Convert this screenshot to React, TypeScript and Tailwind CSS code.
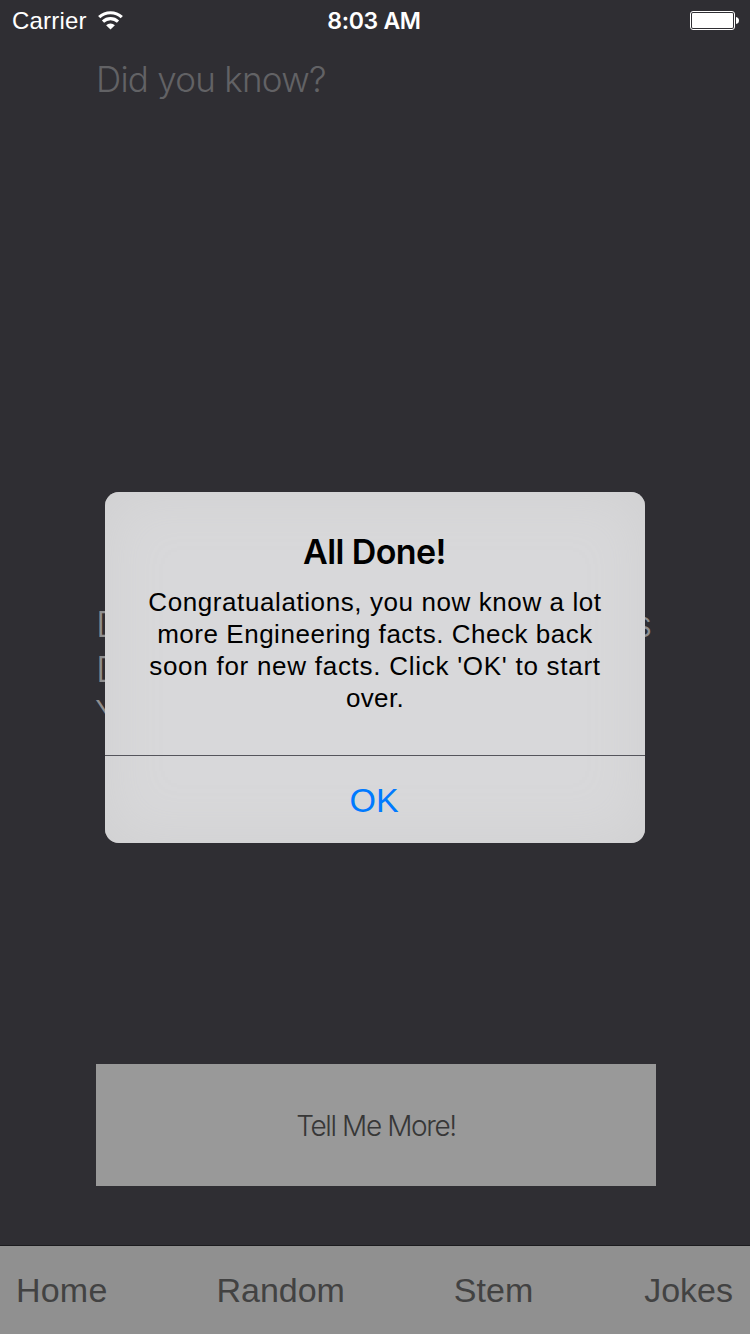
const sans = "font-['Liberation_Sans',sans-serif]";
const inter = "font-['Inter',sans-serif]";

function Wifi() {
  return (
    <svg width="26" height="20" viewBox="0 0 26 20" fill="none" stroke="white" className="ml-[11px]">
      <path d="M1.2 6.2 A16.6 16.6 0 0 1 23.8 6.2" strokeWidth="3.2" />
      <path d="M5 10.6 A11 11 0 0 1 20 10.6" strokeWidth="3.2" />
      <path d="M12.5 18.6 L8.1 14.2 A6.4 6.4 0 0 1 16.9 14.2 Z" fill="white" stroke="none" />
    </svg>
  );
}

function Battery() {
  return (
    <svg width="50" height="20" viewBox="0 0 50 20" className="mt-[1px]">
      <rect x="0.5" y="0.5" width="44" height="18" rx="2.5" fill="none" stroke="white" />
      <rect x="2" y="2" width="41" height="15" rx="1" fill="white" />
      <path d="M46 6 Q49 6.5 49 9.5 Q49 12.5 46 13 Z" fill="white" />
    </svg>
  );
}

function StatusBar() {
  return (
    <header className="flex h-10 items-start text-[24px] leading-10 text-white">
      <div className="flex h-[41px] w-[250px] shrink-0 items-center pl-[12px]">
        <span className="pt-[1px] tracking-[0.2px]">Carrier</span>
        <Wifi />
      </div>
      <span className={`${inter} w-[250px] pt-[1px] pr-[2px] text-center text-[23px] font-semibold tracking-[-0.3px]`}>
        8:03 AM
      </span>
      <div className="flex w-[250px] justify-end pt-[10px] pr-[10px]">
        <Battery />
      </div>
    </header>
  );
}

function Alert() {
  return (
    <div className="absolute top-[492px] left-[105px] flex h-[351px] w-[540px] flex-col rounded-[14px] bg-[#d8d8da] text-center text-black shadow-[inset_0_0_60px_#d0d0d1]">
      <div className="h-[263px] pt-[39px]">
        <h2 className={`${inter} pr-[1px] text-[34px] leading-[42px] font-semibold tracking-[-0.6px]`}>All Done!</h2>
        <p className="flex flex-col pt-[13px] text-[26px] leading-8">
          <span className="tracking-[0.59px]">Congratualations, you now know a lot</span>
          <span className="tracking-[0.53px]">more Engineering facts. Check back</span>
          <span className="tracking-[0.73px]">soon for new facts. Click 'OK' to start</span>
          <span className="tracking-[0.35px]">over.</span>
        </p>
      </div>
      <button className="flex-1 border-t border-[#55555c] pt-[2px] pr-[2px] text-[34px] text-[#007aff]">OK</button>
    </div>
  );
}

export default function App() {
  return (
    <div className={`${sans} relative flex h-[1334px] w-[750px] flex-col overflow-hidden bg-[#2f2e33]`}>
      <StatusBar />
      <main className="flex flex-1 flex-col px-24">
        <h1 className={`${inter} mt-[17px] text-[35px] leading-[44px] font-light tracking-[-0.75px] text-[#626265]`}>
          Did you know?
        </h1>
        <div className={`${inter} mt-[501px] h-[134px] text-[36px] leading-[44.5px] font-light text-[#8f8f90]`}>
          <div className="flex justify-between pr-[2px]">
            <span>D</span>
            <span>s</span>
          </div>
          <div>D</div>
          <div className="-ml-[1px]">Y</div>
        </div>
        <button className={`${inter} mt-[328px] h-[122px] w-[560px] bg-[#999999] pt-[1px] text-[28px] font-light tracking-[-1.4px] text-[#373737]`}>
          Tell Me More!
        </button>
      </main>
      <nav className="flex h-[89px] items-center justify-between border-t border-[#1c1c1f] bg-[#909090] pr-[17px] pl-4 text-[34px] text-[#424242]">
        <span className="tracking-[0.2px]">Home</span>
        <span className="-ml-[2px]">Random</span>
        <span className="-ml-[2px]">Stem</span>
        <span>Jokes</span>
      </nav>
      <Alert />
    </div>
  );
}
